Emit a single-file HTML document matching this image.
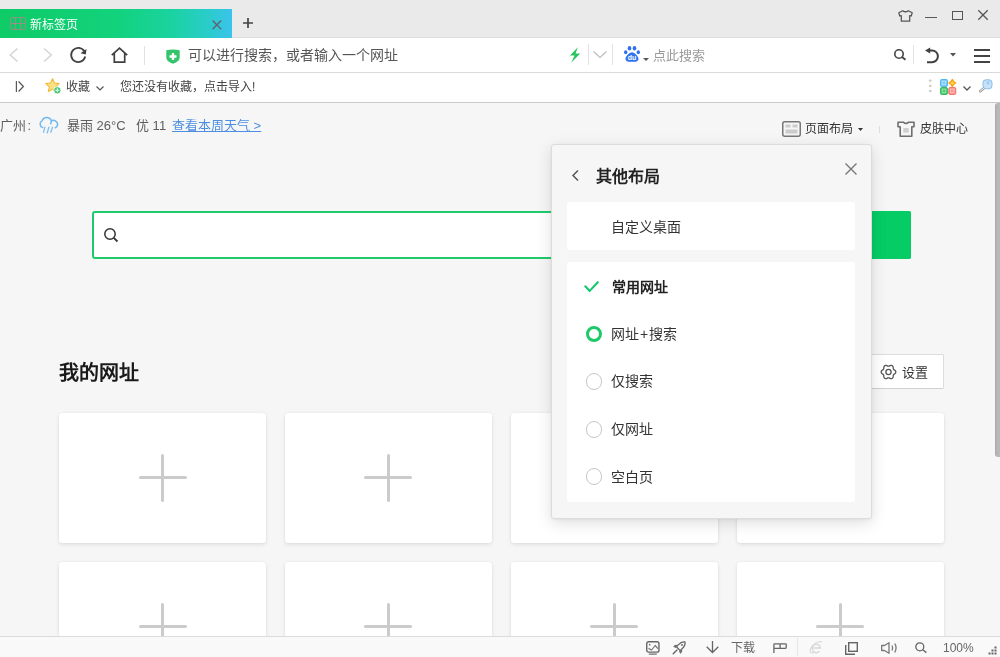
<!DOCTYPE html>
<html lang="zh-CN"><head><meta charset="utf-8">
<style>
*{margin:0;padding:0;box-sizing:border-box}
html,body{width:1000px;height:657px;overflow:hidden;background:#f6f6f6;font-family:"Liberation Sans",sans-serif;color:#333}
.a{position:absolute}
.t{position:absolute;white-space:nowrap;line-height:1;-webkit-font-smoothing:antialiased;will-change:transform}
svg{position:absolute;overflow:visible}
</style></head><body>
<!-- ===== title bar ===== -->
<div class="a" style="left:0;top:0;width:1000px;height:38px;background:#eaeaea;border-bottom:1px solid #dedede"></div>
<div class="a" style="left:0;top:9px;width:232px;height:29px;background:linear-gradient(90deg,#0ecb66 0%,#12d27c 50%,#1ad3a0 74%,#2acccb 90%,#3bc3ec 100%)"></div>
<svg style="left:10px;top:17px" width="16" height="13" viewBox="0 0 16 13"><g fill="none" stroke="#a08c88" stroke-width="1" stroke-opacity="0.9"><rect x="0.55" y="0.55" width="14.9" height="11.9" rx="1.5"/><line x1="5.5" y1="0.5" x2="5.5" y2="12.5"/><line x1="10.5" y1="0.5" x2="10.5" y2="12.5"/><line x1="0.5" y1="6.5" x2="15.5" y2="6.5"/></g></svg>
<div class="t" style="left:30px;top:19px;font-size:12px;font-weight:500;color:#fff">新标签页</div>
<svg style="left:212px;top:20px" width="10" height="10" viewBox="0 0 10 10"><path d="M0.6 0.6L9.2 9.2M9.2 0.6L0.6 9.2" stroke="#5f6470" stroke-width="1.4"/></svg>
<svg style="left:242.5px;top:17.8px" width="10" height="10" viewBox="0 0 10 10"><path d="M5 0v10M0 5h10" stroke="#444" stroke-width="1.7"/></svg>
<!-- window controls -->
<svg style="left:897.5px;top:10px" width="15" height="12" viewBox="0 0 15 12"><path d="M4.7 0.7 L0.8 2.8 L1.8 6 L3.3 5.6 L3.3 11.2 L11.7 11.2 L11.7 5.6 L13.2 6 L14.2 2.8 L10.3 0.7 Q7.5 2.8 4.7 0.7Z" fill="none" stroke="#555" stroke-width="1.25" stroke-linejoin="round"/></svg>
<div class="a" style="left:924.5px;top:17px;width:12px;height:1.4px;background:#5a5a5a"></div>
<div class="a" style="left:951.5px;top:10.5px;width:11.5px;height:9.5px;border:1.3px solid #555;border-top-width:1.8px"></div>
<svg style="left:978px;top:10px" width="10" height="10" viewBox="0 0 10 10"><path d="M0.3 0.3L9.7 9.7M9.7 0.3L0.3 9.7" stroke="#555" stroke-width="1.3"/></svg>

<!-- ===== address bar ===== -->
<div class="a" style="left:0;top:38px;width:1000px;height:35px;background:#fff;border-bottom:1px solid #dadada"></div>
<svg style="left:9px;top:48px" width="10" height="14" viewBox="0 0 10 14"><path d="M8.5 0.5L1.2 7L8.5 13.5" fill="none" stroke="#d3d3d3" stroke-width="1.4"/></svg>
<svg style="left:43px;top:48px" width="10" height="14" viewBox="0 0 10 14"><path d="M1 0.5L8.3 7L1 13.5" fill="none" stroke="#d3d3d3" stroke-width="1.4"/></svg>
<svg style="left:70px;top:47px" width="17" height="16" viewBox="0 0 17 16"><path d="M14.3 4.2 A7.1 7.1 0 1 0 15.2 9.5" fill="none" stroke="#404040" stroke-width="1.8"/><path d="M16.5 2 L15.8 7.6 L10.5 6.3Z" fill="#404040"/></svg>
<svg style="left:111px;top:47px" width="17" height="16" viewBox="0 0 17 16"><path d="M0.8 8.2L8.5 1.2L16.2 8.2M3.3 6.2V15.1H13.7V6.2" fill="none" stroke="#404040" stroke-width="1.7" stroke-linejoin="miter"/></svg>
<div class="a" style="left:144px;top:46px;width:1px;height:19px;background:#e2e2e2"></div>
<svg style="left:166px;top:49px" width="14" height="15" viewBox="0 0 14 15"><path d="M0.3 1.2 Q7 -0.2 13.7 1.2 L13.7 8.5 Q13.7 12.5 7 14.8 Q0.3 12.5 0.3 8.5Z" fill="#34c56c"/><path d="M7 4V11M3.5 7.5H10.5" stroke="#fff" stroke-width="2.4"/></svg>
<div class="t" style="left:188px;top:48px;font-size:14px;color:#555">可以进行搜索，或者输入一个网址</div>
<svg style="left:569px;top:47px" width="12" height="16" viewBox="0 0 12 16"><path d="M8.8 0.3 L1 8.6 L5.6 8.6 L2.2 15.7 L11.2 6.6 L6.6 6.6 Z" fill="#28c462"/></svg>
<div class="a" style="left:588px;top:44px;width:1px;height:21px;background:#e2e2e2"></div>
<svg style="left:593px;top:51px" width="14" height="7" viewBox="0 0 14 7"><path d="M0.5 0.5L7 6.5L13.5 0.5" fill="none" stroke="#bdbdbd" stroke-width="1.2"/></svg>
<div class="a" style="left:612px;top:44px;width:1px;height:21px;background:#e2e2e2"></div>
<!-- baidu paw -->
<svg style="left:624px;top:46px" width="16" height="16" viewBox="0 0 16 16"><g fill="#3072f0"><ellipse cx="5.5" cy="2.3" rx="1.8" ry="2.2"/><ellipse cx="10.5" cy="2.3" rx="1.8" ry="2.2"/><ellipse cx="1.7" cy="6.2" rx="1.7" ry="2"/><ellipse cx="14.3" cy="6.2" rx="1.7" ry="2"/><path d="M8 6.2 C5.5 6.2 1.3 10.5 1.5 13 C1.7 15.8 4.5 15.8 8 15.8 C11.5 15.8 14.3 15.8 14.5 13 C14.7 10.5 10.5 6.2 8 6.2Z"/></g><text x="8" y="14.3" font-size="7" font-family="Liberation Sans" font-weight="bold" fill="#fff" text-anchor="middle">du</text></svg>
<svg style="left:643px;top:58px" width="6" height="3" viewBox="0 0 6 3"><path d="M0 0H6L3 3Z" fill="#555"/></svg>
<div class="t" style="left:653px;top:49px;font-size:13px;color:#999">点此搜索</div>
<svg style="left:894px;top:49px" width="12" height="11" viewBox="0 0 12 11"><circle cx="5" cy="5" r="4.2" fill="none" stroke="#444" stroke-width="1.6"/><path d="M8 8L11.5 10.8" stroke="#444" stroke-width="1.8"/></svg>
<div class="a" style="left:913px;top:45px;width:1px;height:19px;background:#e2e2e2"></div>
<svg style="left:924px;top:46px" width="16" height="18" viewBox="0 0 16 18"><path d="M5.5 4.4 H8 A5.9 5.9 0 0 1 8 16.2 H3" fill="none" stroke="#404040" stroke-width="2"/><path d="M1 4.4 L6.2 1.4 L6.2 7.4Z" fill="#404040"/></svg>
<svg style="left:950px;top:53px" width="6" height="4" viewBox="0 0 6 4"><path d="M0 0H6L3 3.5Z" fill="#555"/></svg>
<div class="a" style="left:974px;top:48.5px;width:16px;height:2px;background:#444"></div>
<div class="a" style="left:974px;top:54.5px;width:16px;height:2px;background:#444"></div>
<div class="a" style="left:974px;top:60.7px;width:16px;height:2px;background:#444"></div>

<!-- ===== bookmark bar ===== -->
<div class="a" style="left:0;top:73px;width:1000px;height:30px;background:#fff;border-bottom:1px solid #c9c9c9"></div>
<svg style="left:15px;top:81px" width="10" height="11" viewBox="0 0 10 11"><path d="M1.4 0V11" stroke="#5a5a5a" stroke-width="1.2"/><path d="M3.6 0.5L8.4 5.5L3.6 10.5" fill="none" stroke="#555" stroke-width="1.25"/></svg>
<svg style="left:45px;top:78px" width="17" height="17" viewBox="0 0 17 17"><path d="M7.5 0.8 L9.5 5 L14.2 5.6 L10.7 8.9 L11.7 13.6 L7.5 11.3 L3.3 13.6 L4.3 8.9 L0.8 5.6 L5.5 5Z" fill="#fbe084" stroke="#f3bb3a" stroke-width="1.1" stroke-linejoin="round"/><circle cx="12.3" cy="12.3" r="3.6" fill="#43c470" stroke="#fff" stroke-width="0.8"/><path d="M12.3 10.3V14.3M10.3 12.3H14.3" stroke="#e8fff0" stroke-width="1.1"/></svg>
<div class="t" style="left:66px;top:81px;font-size:12px;color:#444">收藏</div>
<svg style="left:96px;top:86px" width="8" height="5" viewBox="0 0 8 5"><path d="M0.5 0.5L4 4L7.5 0.5" fill="none" stroke="#555" stroke-width="1.2"/></svg>
<div class="t" style="left:120px;top:80.5px;font-size:12px;color:#444">您还没有收藏，点击导入!</div>
<svg style="left:929px;top:79px" width="3" height="14" viewBox="0 0 3 14"><g fill="#cacaca"><rect x="0" y="0.6" width="2.5" height="2"/><rect x="0" y="5.9" width="2.5" height="2"/><rect x="0" y="11.1" width="2.5" height="2"/></g></svg>
<svg style="left:940px;top:78.5px" width="17" height="16" viewBox="0 0 17 16"><g stroke-width="0.9"><rect x="0.45" y="0.45" width="7" height="7" rx="1.3" fill="#7ecbf7" stroke="#45aef0"/><rect x="0.45" y="8.5" width="7" height="7" rx="1.3" fill="#4fcb72" stroke="#2fb556"/><rect x="8.8" y="8.5" width="7" height="7" rx="1.3" fill="#fa948e" stroke="#f26a62"/></g><g fill="none" stroke="#fff" stroke-opacity="0.45" stroke-width="0.8"><rect x="2.2" y="2.2" width="3.5" height="3.5"/><rect x="2.2" y="10.2" width="3.5" height="3.5"/><rect x="10.5" y="10.2" width="3.5" height="3.5"/></g><path d="M12.3 0.5 Q13 3 15.8 4 Q13 5 12.3 7.5 Q11.6 5 8.8 4 Q11.6 3 12.3 0.5Z" fill="#fcd34d" stroke="#f5a30b" stroke-width="1.3" stroke-linejoin="round"/></svg>
<svg style="left:963px;top:86px" width="8" height="5" viewBox="0 0 8 5"><path d="M0.5 0.5L4 4L7.5 0.5" fill="none" stroke="#555" stroke-width="1.3"/></svg>
<svg style="left:979px;top:79px" width="14" height="14" viewBox="0 0 14 14"><path d="M4.8 9.2 L1.2 12.2" stroke="#999" stroke-width="2.6" stroke-linecap="round"/><path d="M4.8 9.2 L1.2 12.2" stroke="#fff" stroke-width="1" stroke-linecap="round"/><rect x="4" y="0.8" width="9" height="9" rx="3" fill="#c6e2f8" stroke="#86bde8" stroke-width="1"/><circle cx="9" cy="3.8" r="1.1" fill="none" stroke="#86bde8" stroke-width="0.8"/></svg>

<!-- ===== content ===== -->
<div class="t" style="left:-0.5px;top:119px;font-size:13px;color:#5e5e5e">广州<span style="margin-left:1.5px">:</span></div>
<svg style="left:39px;top:117px" width="20" height="17" viewBox="0 0 20 17"><path d="M3.7 10.6 C0.6 9.6 0.2 5.2 3 3.8 C4 0.6 8 -0.3 10.4 1.2 C12.6 2.5 12.8 5.2 11.6 6.7M13.2 3.4 C16.2 2.9 18.9 5.2 18.6 7.9 C18.4 9.6 17.4 10.4 16.3 10.8" fill="none" stroke="#6cb8f0" stroke-width="1.5" stroke-linecap="round"/><path d="M5.9 10.2 L4.5 15.3 M9.9 10.2 L8.2 16 M13.5 10.2 L11.8 15.3" stroke="#7fbff2" stroke-width="1.3" stroke-linecap="round"/></svg>
<div class="t" style="left:67px;top:119px;font-size:13px;color:#5e5e5e">暴雨 26°C</div>
<div class="t" style="left:136px;top:119px;font-size:13px;color:#5e5e5e">优 11</div>
<div class="t" style="left:172px;top:119px;font-size:13px;color:#4c8fe0;text-decoration:underline">查看本周天气 &gt;</div>

<svg style="left:782px;top:121px" width="19" height="16" viewBox="0 0 19 16"><rect x="0.75" y="0.75" width="17.5" height="14.5" rx="2" fill="none" stroke="#777" stroke-width="1.5"/><rect x="3.5" y="3.5" width="5" height="3" fill="#ccc"/><rect x="10.5" y="3.5" width="5" height="3" fill="#ccc"/><rect x="3.5" y="8.5" width="12" height="4" fill="#ccc"/></svg>
<div class="t" style="left:805px;top:123px;font-size:12px;color:#333">页面布局</div>
<svg style="left:858px;top:128px" width="5" height="3" viewBox="0 0 5 3"><path d="M0 0H5L2.5 3Z" fill="#333"/></svg>
<div class="a" style="left:879px;top:126px;width:1px;height:7px;background:#ddd"></div>
<svg style="left:897px;top:121px" width="19" height="17" viewBox="0 0 19 17"><path d="M1 1.2 H6.3 Q9 3.8 11.7 1.2 H17 V5.8 H14.8 V15.2 H3.2 V5.8 H1 Z" fill="none" stroke="#6f6f6f" stroke-width="1.6" stroke-linejoin="round"/><rect x="6.3" y="7" width="5.4" height="4.6" fill="#cfcfcf"/></svg>
<div class="t" style="left:920px;top:123px;font-size:12px;color:#333">皮肤中心</div>

<!-- search box -->
<div class="a" style="left:92px;top:211px;width:819px;height:47.5px;background:#fff;border:2px solid #1ecb6c;border-radius:3px"></div>
<svg style="left:104px;top:228px" width="14" height="14" viewBox="0 0 14 14"><circle cx="6" cy="6" r="5.2" fill="none" stroke="#333" stroke-width="1.5"/><path d="M9.8 9.8L13.5 13.5" stroke="#333" stroke-width="1.8"/></svg>
<div class="a" style="left:760px;top:211px;width:151px;height:47.5px;background:#06cc66;border-radius:0 2px 2px 0"></div>

<!-- my sites -->
<div class="t" style="left:59px;top:362.5px;font-size:20px;font-weight:bold;color:#1a1a1a">我的网址</div>
<div class="a" style="left:866px;top:354px;width:78px;height:35px;background:#fff;border:1px solid #dcdcdc;border-bottom-color:#d0d0d0;border-radius:2px"></div>
<svg style="left:879.8px;top:363.6px" width="17" height="16" viewBox="0 0 17 16"><path d="M15.80 8.00 L15.70 8.63 L15.41 9.22 L14.83 9.70 L14.22 10.08 L13.82 10.48 L13.52 10.90 L13.31 11.37 L13.16 11.91 L13.13 12.63 L13.01 13.37 L12.65 13.92 L12.15 14.32 L11.55 14.55 L10.90 14.59 L10.20 14.33 L9.56 14.00 L9.01 13.85 L8.50 13.80 L7.99 13.85 L7.44 14.00 L6.80 14.33 L6.10 14.59 L5.45 14.55 L4.85 14.32 L4.35 13.92 L3.99 13.37 L3.87 12.63 L3.84 11.91 L3.69 11.37 L3.48 10.90 L3.18 10.48 L2.78 10.08 L2.17 9.70 L1.59 9.22 L1.30 8.63 L1.20 8.00 L1.30 7.37 L1.59 6.78 L2.17 6.30 L2.78 5.92 L3.18 5.52 L3.48 5.10 L3.69 4.63 L3.84 4.09 L3.87 3.37 L3.99 2.63 L4.35 2.08 L4.85 1.68 L5.45 1.45 L6.10 1.41 L6.80 1.67 L7.44 2.00 L7.99 2.15 L8.50 2.20 L9.01 2.15 L9.56 2.00 L10.20 1.67 L10.90 1.41 L11.55 1.45 L12.15 1.68 L12.65 2.08 L13.01 2.63 L13.13 3.37 L13.16 4.09 L13.31 4.63 L13.52 5.10 L13.82 5.52 L14.22 5.92 L14.83 6.30 L15.41 6.78 L15.70 7.37Z" fill="none" stroke="#555" stroke-width="1.3" stroke-linejoin="round"/><circle cx="8.5" cy="8" r="2.6" fill="none" stroke="#555" stroke-width="1.3"/></svg>
<div class="t" style="left:902px;top:366px;font-size:13px;color:#333">设置</div>

<div class="a card" style="left:59px;top:413px"></div>
<div class="a card" style="left:284.9px;top:413px"></div>
<div class="a card" style="left:510.8px;top:413px"></div>
<div class="a card" style="left:736.6px;top:413px"></div>
<div class="a card" style="left:59px;top:562px"></div>
<div class="a card" style="left:284.9px;top:562px"></div>
<div class="a card" style="left:510.8px;top:562px"></div>
<div class="a card" style="left:736.6px;top:562px"></div>
<style>.card{width:207.4px;height:130px;background:#fff;border-radius:3px;box-shadow:0 2px 4px rgba(0,0,0,0.08),0 0 2px rgba(0,0,0,0.08)}.card:after{content:"";position:absolute;left:79.5px;top:63.2px;width:48px;height:3px;border-radius:1.5px;background:#cbcbcb}.card:before{content:"";position:absolute;left:102px;top:40.8px;width:3px;height:48px;border-radius:1.5px;background:#cbcbcb}</style>


<!-- scrollbar -->
<div class="a" style="left:995px;top:103px;width:5px;height:354px;background:linear-gradient(90deg,#a9a9a9,#b9b9b9 45%);border-radius:3px 0 0 3px"></div>

<!-- ===== status bar ===== -->
<div class="a" style="left:0;top:636px;width:1000px;height:21px;background:#f9f9f9;border-top:1px solid #dcdcdc"></div>
<svg style="left:645.5px;top:640.5px" width="14" height="14" viewBox="0 0 14 14"><rect x="0.75" y="0.75" width="12.2" height="10.4" rx="2" fill="none" stroke="#666" stroke-width="1.4"/><path d="M2.5 7.4 L5.6 9 L9.2 4.5 L11.8 7.6" fill="none" stroke="#777" stroke-width="1.2" stroke-linejoin="round"/><circle cx="3.7" cy="3.7" r="0.9" fill="#777"/><rect x="2.8" y="12.4" width="8" height="1.5" fill="#888"/></svg>
<svg style="left:672px;top:641px" width="14" height="14" viewBox="0 0 14 14"><path d="M13 1 C10.5 0.6 8.2 1.8 6.2 3.9 L4.4 5.8 L8.2 9.6 L10.1 7.8 C12.2 5.8 13.4 3.5 13 1Z" fill="none" stroke="#666" stroke-width="1.3" stroke-linejoin="round"/><circle cx="10" cy="4" r="0.9" fill="#666"/><path d="M5.5 4.6 L3.2 4.2 L1.8 5.6 L4 6.4M9.4 8.5 L9.8 10.8 L8.4 12.2 L7.6 10" fill="#777" stroke="#666" stroke-width="1" stroke-linejoin="round"/><path d="M5 9 L1.2 12.8" stroke="#666" stroke-width="1.4" stroke-linecap="round"/></svg>
<svg style="left:706px;top:641px" width="13" height="12" viewBox="0 0 13 12"><path d="M6.5 0V11.5M0.7 5.7L6.5 11.5L12.3 5.7" fill="none" stroke="#666" stroke-width="1.3"/></svg>
<div class="t" style="left:731px;top:642px;font-size:12px;color:#666">下载</div>
<svg style="left:773px;top:643px" width="14" height="10" viewBox="0 0 14 10"><path d="M0.9 10V1.5Q0.9 0.8 1.6 0.8H6.4Q7.1 0.8 7.1 1.5V4.6Q7.1 5.3 6.4 5.3H0.9M7.1 1.5Q7.1 0.8 7.8 0.8H12.5Q13.2 0.8 13.2 1.5V4.6Q13.2 5.3 12.5 5.3H7.1" fill="none" stroke="#666" stroke-width="1.3"/></svg>
<div class="a" style="left:797px;top:638px;width:1px;height:18px;background:#e6e6e6"></div>
<svg style="left:809px;top:640.5px" width="14" height="13" viewBox="0 0 14 13"><path d="M4 7H11.5A4.2 4.2 0 1 0 10.5 10.3" fill="none" stroke="#d9d9d9" stroke-width="1.4"/><path d="M13 1 C10 -0.5 3 3 1.2 8.5 C0.5 11.5 2.5 12.8 6 11.2" fill="none" stroke="#d9d9d9" stroke-width="1.1"/></svg>
<svg style="left:845px;top:642px" width="13" height="13" viewBox="0 0 13 13"><rect x="3.7" y="0.7" width="8.6" height="8.6" fill="none" stroke="#666" stroke-width="1.4"/><path d="M0.7 3V12.3H10" fill="none" stroke="#666" stroke-width="1.4"/></svg>
<svg style="left:881px;top:642px" width="17" height="12" viewBox="0 0 17 12"><path d="M0.7 3.5H3.5L8 0.7V11.3L3.5 8.5H0.7Z" fill="none" stroke="#777" stroke-width="1.3" stroke-linejoin="round"/><path d="M11 3.5Q12.3 6 11 8.5M13.8 1.5Q16.3 6 13.8 10.5" fill="none" stroke="#777" stroke-width="1.3"/></svg>
<svg style="left:915px;top:642px" width="12" height="11" viewBox="0 0 12 11"><circle cx="4.8" cy="4.8" r="4" fill="none" stroke="#666" stroke-width="1.3"/><path d="M7.8 7.8L11.3 10.6" stroke="#666" stroke-width="1.4"/></svg>
<div class="t" style="left:943px;top:641.5px;font-size:12px;color:#666">100%</div>
<svg style="left:988px;top:646px" width="9" height="9" viewBox="0 0 9 9"><g fill="#666"><rect x="6.5" y="0.5" width="2" height="2"/><rect x="3.5" y="3.5" width="2" height="2"/><rect x="6.5" y="3.5" width="2" height="2"/><rect x="0.5" y="6.5" width="2" height="2"/><rect x="3.5" y="6.5" width="2" height="2"/><rect x="6.5" y="6.5" width="2" height="2"/></g></svg>

<!-- ===== panel ===== -->
<div class="a" style="left:550.5px;top:144px;width:321.5px;height:375px;background:#f6f6f6;border:1px solid #dcdcdc;border-radius:3px;box-shadow:0 4px 16px rgba(0,0,0,0.13),0 1px 3px rgba(0,0,0,0.06)"></div>
<svg style="left:572px;top:170px" width="7" height="11" viewBox="0 0 7 11"><path d="M6 0.5L1 5.5L6 10.5" fill="none" stroke="#555" stroke-width="1.5"/></svg>
<div class="t" style="left:596px;top:169px;font-size:16px;font-weight:bold;color:#222">其他布局</div>
<svg style="left:845px;top:163px" width="12" height="12" viewBox="0 0 12 12"><path d="M0.5 0.5L11.5 11.5M11.5 0.5L0.5 11.5" stroke="#777" stroke-width="1.4"/></svg>
<div class="a" style="left:567px;top:202px;width:288px;height:48px;background:#fff;border-radius:3px"></div>
<div class="t" style="left:610.5px;top:219.5px;font-size:14px;color:#333">自定义桌面</div>
<div class="a" style="left:567px;top:262px;width:288px;height:240px;background:#fff;border-radius:3px"></div>
<svg style="left:584px;top:281px" width="16" height="12" viewBox="0 0 16 12"><path d="M1.3 5.3L5.7 9.9L13.8 1.2" fill="none" stroke="#14c96c" stroke-width="2.1" stroke-linecap="round" stroke-linejoin="round"/></svg>
<div class="t" style="left:612px;top:279.5px;font-size:14px;font-weight:bold;color:#222">常用网址</div>
<div class="a" style="left:586px;top:326px;width:16px;height:16px;border:3px solid #1ec96b;border-radius:50%"></div>
<div class="t" style="left:611px;top:327px;font-size:14px;color:#333">网址<span style="margin:0 1px">+</span>搜索</div>
<div class="a" style="left:586px;top:373.3px;width:16.3px;height:16.3px;border:1px solid #c6c6c6;border-radius:50%"></div>
<div class="t" style="left:611px;top:374px;font-size:14px;color:#333">仅搜索</div>
<div class="a" style="left:586px;top:421.3px;width:16.3px;height:16.3px;border:1px solid #c6c6c6;border-radius:50%"></div>
<div class="t" style="left:611px;top:422px;font-size:14px;color:#333">仅网址</div>
<div class="a" style="left:586px;top:468.3px;width:16.3px;height:16.3px;border:1px solid #c6c6c6;border-radius:50%"></div>
<div class="t" style="left:610.5px;top:470px;font-size:14px;color:#333">空白页</div>
</body></html>
